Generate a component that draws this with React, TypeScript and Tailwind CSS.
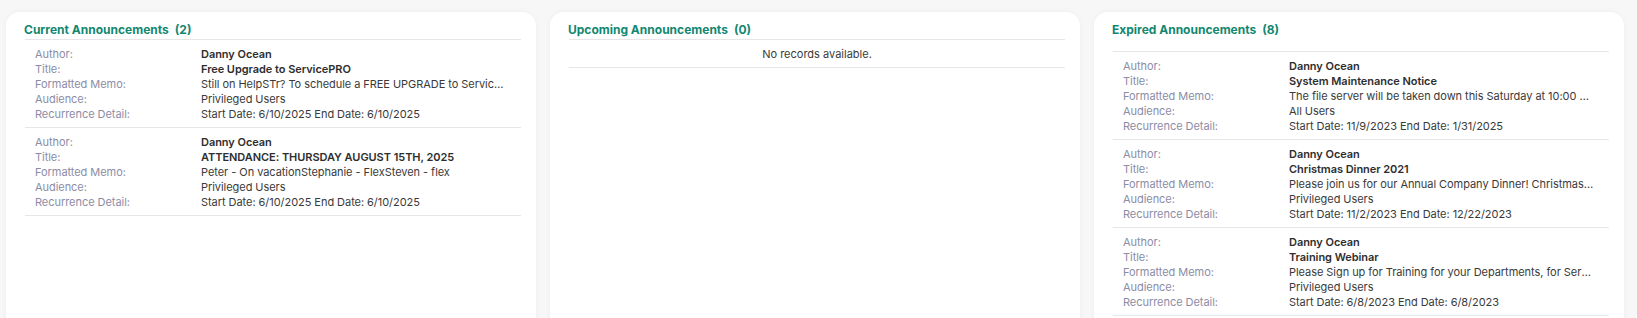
import React from "react";

type Rec = { author: string; title: string; memo: string; audience: string; recurrence: string };

const current: Rec[] = [
  {
    author: "Danny Ocean",
    title: "Free Upgrade to ServicePRO",
    memo: "Still on HelpSTr? To schedule a FREE UPGRADE to ServicePRO, please contact our support team today.",
    audience: "Privileged Users",
    recurrence: "Start Date: 6/10/2025 End Date: 6/10/2025",
  },
  {
    author: "Danny Ocean",
    title: "ATTENDANCE: THURSDAY AUGUST 15TH, 2025",
    memo: "Peter - On vacationStephanie - FlexSteven - flex",
    audience: "Privileged Users",
    recurrence: "Start Date: 6/10/2025 End Date: 6/10/2025",
  },
];

const expired: Rec[] = [
  {
    author: "Danny Ocean",
    title: "System Maintenance Notice",
    memo: "The file server will be taken down this Saturday at 10:00 am for scheduled maintenance.",
    audience: "All Users",
    recurrence: "Start Date: 11/9/2023 End Date: 1/31/2025",
  },
  {
    author: "Danny Ocean",
    title: "Christmas Dinner 2021",
    memo: "Please join us for our Annual Company Dinner! Christmas dinner will be held downtown.",
    audience: "Privileged Users",
    recurrence: "Start Date: 11/2/2023 End Date: 12/22/2023",
  },
  {
    author: "Danny Ocean",
    title: "Training Webinar",
    memo: "Please Sign up for Training for your Departments, for ServicePRO and related modules.",
    audience: "Privileged Users",
    recurrence: "Start Date: 6/8/2023 End Date: 6/8/2023",
  },
];

function Row({ label, value, bold }: { label: string; value: string; bold?: boolean }) {
  return (
    <div className="flex h-[15px] leading-[15px]">
      <div className="w-[166px] shrink-0 text-[#8d8ca6]">{label}</div>
      <div
        className={
          "min-w-0 flex-1 truncate " + (bold ? "font-semibold text-[#2e2e2e]" : "text-[#3a3a3a]")
        }
      >
        {value}
      </div>
    </div>
  );
}

function Record({ r }: { r: Rec }) {
  return (
    <div className="border-t border-[#e6e6e6] pb-[5px] pl-[10px] pr-[15px] pt-[7px]">
      <Row label="Author:" value={r.author} bold />
      <Row label="Title:" value={r.title} bold />
      <Row label="Formatted Memo:" value={r.memo} />
      <Row label="Audience:" value={r.audience} />
      <Row label="Recurrence Detail:" value={r.recurrence} />
    </div>
  );
}

function Card({
  title,
  count,
  records,
  extraGap,
}: {
  title: string;
  count: number;
  records: Rec[];
  extraGap?: boolean;
}) {
  return (
    <div className="min-h-[330px] rounded-[14px] bg-white pl-[19px] pr-[15px] pt-[7px] shadow-[0_0_6px_rgba(0,0,0,0.04)]">
      <div
        className={
          "-ml-[1px] h-[20px] pt-[1px] text-[12px] font-bold leading-[20px] text-[#12876f] " +
          (extraGap ? "mb-[12px]" : "")
        }
      >
        {title}
        <span className="ml-[6px]">({count})</span>
      </div>
      {records.length === 0 ? (
        <div className="border-y border-[#e6e6e6] pt-[1px] text-center text-[11px] leading-[26px] text-[#3a3a3a]">
          No records available.
        </div>
      ) : (
        <div className="border-b border-[#e6e6e6] text-[11px] tracking-[-0.05px]">
          {records.map((r, i) => (
            <Record key={i} r={r} />
          ))}
        </div>
      )}
    </div>
  );
}

export default function App() {
  return (
    <div
      className="h-[318px] overflow-hidden bg-[#f7f7f7] pl-[6px] pr-[13px] pt-[12px]"
      style={{ fontFamily: "Inter, 'Noto Sans', sans-serif" }}
    >
      <div className="grid grid-cols-3 gap-x-[14px]">
        <Card title="Current Announcements" count={2} records={current} />
        <Card title="Upcoming Announcements" count={0} records={[]} />
        <Card title="Expired Announcements" count={8} records={expired} extraGap />
      </div>
    </div>
  );
}
